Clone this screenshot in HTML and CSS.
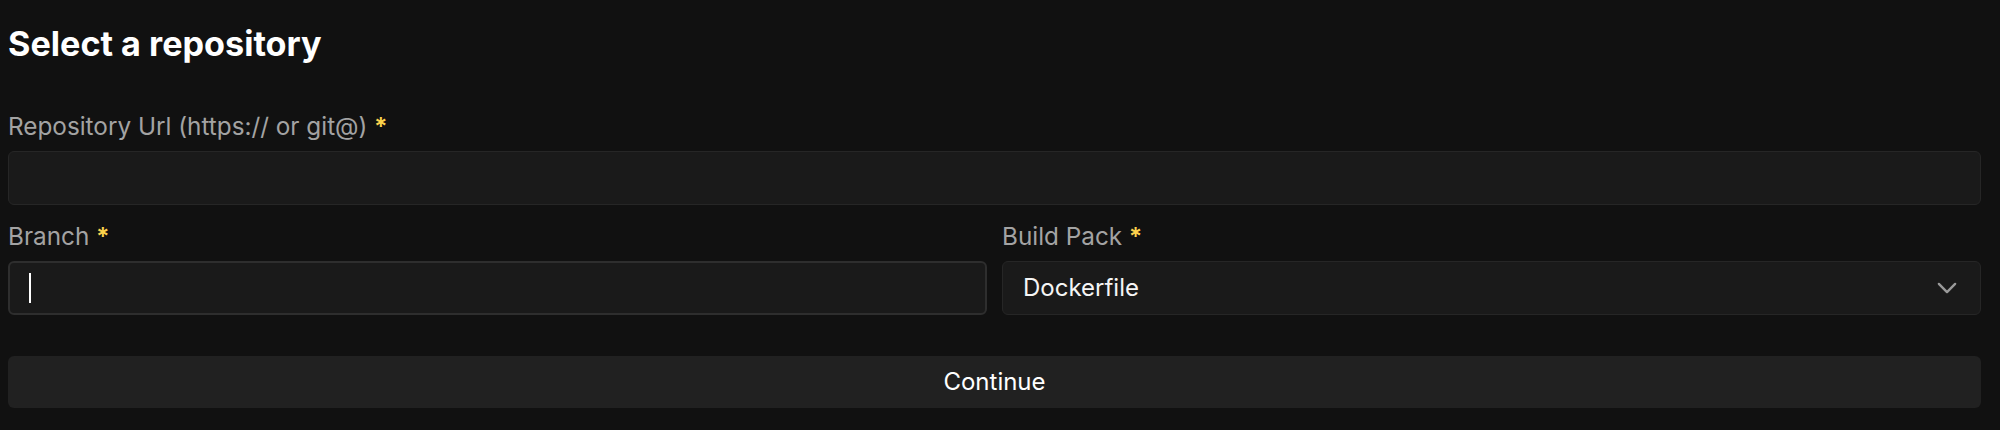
FILE: index.html
```html
<!DOCTYPE html>
<html lang="en">
<head>
<meta charset="utf-8">
<title>Select a repository</title>
<link rel="stylesheet" href="styles.css">
</head>
<body>
<main class="page">
  <h2 class="title">Select a repository</h2>
  <form class="form">
    <div class="field">
      <label class="label">Repository Url (https:// or git@) <span class="req">*</span></label>
      <div class="input"></div>
    </div>
    <div class="row">
      <div class="field">
        <label class="label">Branch <span class="req">*</span></label>
        <div class="input input-focus"><span class="caret"></span></div>
      </div>
      <div class="field">
        <label class="label">Build Pack <span class="req">*</span></label>
        <div class="input select">
          <span class="value">Dockerfile</span>
          <svg class="chevron" viewBox="0 0 24 24" fill="none" stroke="currentColor" stroke-width="2.2" stroke-linecap="round" stroke-linejoin="round"><path d="M19.5 8.25l-7.5 7.5-7.5-7.5"/></svg>
        </div>
      </div>
    </div>
    <button type="button" class="btn">Continue</button>
  </form>
</main>
</body>
</html>
```

FILE: styles.css
```css
html, body {
  margin: 0;
  padding: 0;
  background: #111111;
}
body {
  font-family: Inter, "Noto Sans", sans-serif;
  color: #ffffff;
}
.page {
  padding: 24px 19px 0 8px;
  height: 430px;
  box-sizing: border-box;
}
.title {
  margin: 0;
  font-size: 34.2px;
  line-height: 40px;
  font-weight: 700;
  color: #ffffff;
}
.form {
  margin-top: 46px;
  display: flex;
  flex-direction: column;
}
.field {
  display: flex;
  flex-direction: column;
  gap: 9px;
}
.label {
  font-size: 24.3px;
  line-height: 32px;
  color: #a3a3a3;
}
.req {
  color: #fcd34d;
  font-weight: 600;
}
.input {
  height: 54px;
  box-sizing: border-box;
  border: 1px solid #262626;
  border-radius: 6px;
  background: #1a1a1a;
  display: flex;
  align-items: center;
  padding: 0 20px;
  font-size: 24px;
  line-height: 30px;
  color: #ffffff;
}
.input-focus {
  border: 2px solid #2e2e2e;
  padding: 0 19px;
}
.caret {
  display: block;
  width: 2px;
  height: 30px;
  background: #ffffff;
}
.row {
  margin-top: 15px;
  display: grid;
  grid-template-columns: 1fr 1fr;
  column-gap: 15px;
}
.select {
  justify-content: space-between;
  padding-right: 20px;
}
.value {
  color: #f5f5f5;
}
.chevron {
  width: 26px;
  height: 26px;
  color: #9a9a9a;
}
.btn {
  margin-top: 41px;
  height: 52px;
  border: none;
  border-radius: 6px;
  background: #212121;
  color: #ffffff;
  font-family: Inter, "Noto Sans", sans-serif;
  font-size: 24px;
  line-height: 30px;
  cursor: pointer;
}
```
